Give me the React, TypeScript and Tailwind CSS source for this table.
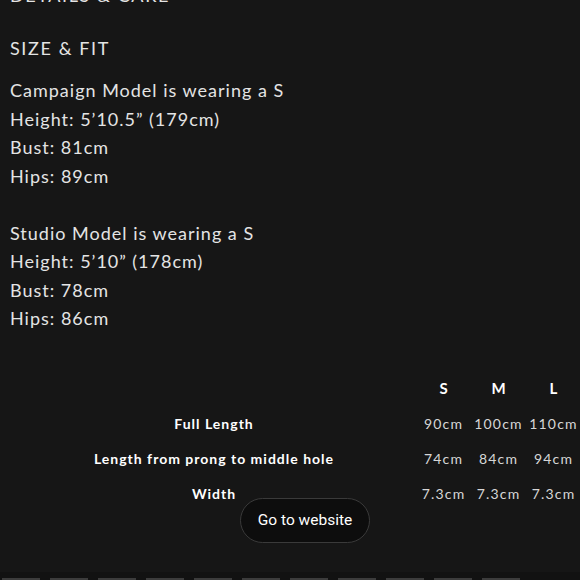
import React from 'react';

const rows = [
  { label: 'Full Length', values: ['90cm', '100cm', '110cm'] },
  { label: 'Length from prong to middle hole', values: ['74cm', '84cm', '94cm'] },
  { label: 'Width', values: ['7.3cm', '7.3cm', '7.3cm'] },
];

const models = [
  ['Campaign Model is wearing a S', 'Height: 5’10.5” (179cm)', 'Bust: 81cm', 'Hips: 89cm'],
  ['Studio Model is wearing a S', 'Height: 5’10” (178cm)', 'Bust: 78cm', 'Hips: 86cm'],
];

export default function App() {
  return (
    <div
      className="relative h-[580px] w-[580px] overflow-hidden bg-[#161616] text-[#e4e4e4]"
      style={{ fontFamily: 'Lato, "Open Sans", sans-serif' }}
    >
      {/* text block */}
      <div className="mt-[-19px] pl-[10px] text-[18px] leading-[28.5px] tracking-[1px]">
        <div className="tracking-[1.6px]">DETAILS &amp; CARE</div>
        <div className="mt-[24.5px] tracking-[1.6px]">SIZE &amp; FIT</div>
        <div className="mt-[13.5px]">
          {models.map((lines, i) => (
            <div key={i} className={i > 0 ? 'mt-[28.5px]' : ''}>
              {lines.map((l) => (
                <div key={l}>{l}</div>
              ))}
            </div>
          ))}
        </div>
      </div>

      {/* size table */}
      <div className="mt-[38px] grid grid-cols-[416px_55px_55px_55px] text-[14px]">
        <div className="h-[35px]" />
        {['S', 'M', 'L'].map((s) => (
          <div key={s} className="flex h-[35px] items-center justify-center font-bold text-[15px] text-white">
            {s}
          </div>
        ))}
        {rows.map((r) => (
          <React.Fragment key={r.label}>
            <div className="flex h-[35px] items-center justify-center pl-[12px] font-bold tracking-[1px] text-white">
              {r.label}
            </div>
            {r.values.map((v, i) => (
              <div key={i} className="flex h-[35px] items-center justify-center tracking-[1.2px] text-[#d6d6d6]">
                {v}
              </div>
            ))}
          </React.Fragment>
        ))}
      </div>

      {/* bottom thumbnails strip */}
      <div className="absolute bottom-0 left-0 flex h-[8px] w-full items-end gap-[10px] bg-[#121212] px-[2px]">
        {Array.from({ length: 11 }).map((_, i) => (
          <div key={i} className="h-[2px] w-[38px] bg-[#3c3c3c]" />
        ))}
      </div>

      {/* floating button */}
      <button
        type="button"
        className="absolute left-[240px] top-[498px] flex h-[45px] w-[130px] items-center justify-center rounded-full border border-[#3a3a3a] bg-[#0d0d0d] text-[15.5px] text-white"
        style={{ fontFamily: 'Roboto, sans-serif' }}
      >
        Go to website
      </button>
    </div>
  );
}
